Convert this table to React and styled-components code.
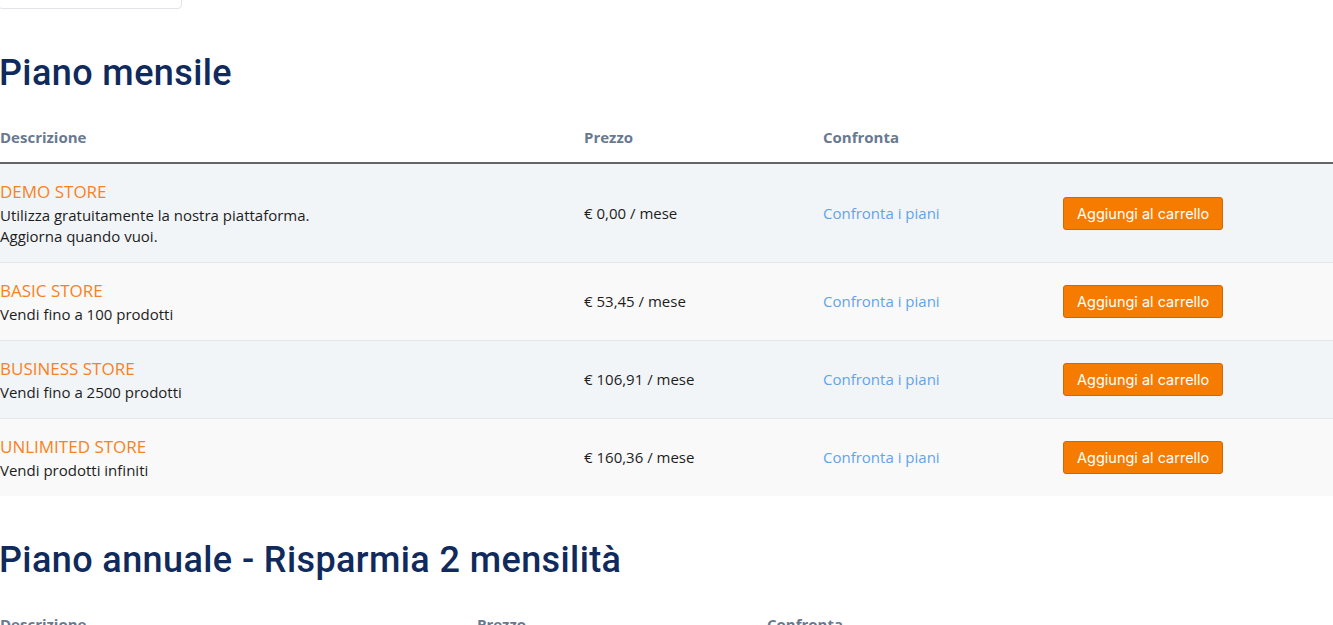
import styled, { createGlobalStyle } from "styled-components";

const monthly = [
  {
    name: "DEMO STORE",
    desc: ["Utilizza gratuitamente la nostra piattaforma.", "Aggiorna quando vuoi."],
    price: "€ 0,00",
  },
  { name: "BASIC STORE", desc: ["Vendi fino a 100 prodotti"], price: "€ 53,45" },
  { name: "BUSINESS STORE", desc: ["Vendi fino a 2500 prodotti"], price: "€ 106,91" },
  { name: "UNLIMITED STORE", desc: ["Vendi prodotti infiniti"], price: "€ 160,36" },
];

const GlobalStyle = createGlobalStyle`
  body {
    margin: 0;
    background: #fff;
    font-family: "Open Sans", "Liberation Sans", sans-serif;
    color: #1f1f1f;
  }
`;

const Page = styled.div`
  width: 1333px;
  overflow: hidden;
`;

const TopBox = styled.div`
  width: 184px;
  height: 30px;
  margin-top: -21px;
  margin-left: -2px;
  border: 1px solid #e3e3ea;
  border-radius: 4px;
  box-sizing: border-box;
`;

const Heading = styled.h2`
  margin: 43px 0 20px -1px;
  font-family: Roboto, "Liberation Sans", sans-serif;
  font-size: 36px;
  font-weight: 500;
  line-height: 42px;
  letter-spacing: 0.4px;
  color: #102a5c;
`;

const Table = styled.table`
  width: 100%;
  border-collapse: collapse;
  font-size: 15px;
`;

const Th = styled.th`
  text-align: left;
  font-size: 15px;
  font-weight: 700;
  color: #687990;
  padding: 13px 0 15px;
  line-height: 20px;
  border-bottom: 2px solid #666;
`;

const Row = styled.tr`
  background: ${(p) => (p.$odd ? "#f2f5f8" : "#f9f9f9")};
  border-top: 1px solid #e3e6ea;
`;

const Td = styled.td`
  padding: 15px 0;
  vertical-align: middle;
  line-height: 21px;
`;

const PlanName = styled.div`
  font-size: 17px;
  line-height: 26px;
  color: #fa8122;
`;

const PlanDesc = styled.div`
  color: #1d1d1d;
`;

const Price = styled.span`
  color: #1d1d1d;
`;

const CompareLink = styled.a`
  color: #5fa4ee;
  text-decoration: none;
  cursor: pointer;
`;

const CartButton = styled.button`
  font-family: Inter, "Liberation Sans", sans-serif;
  font-size: 14.5px;
  color: #fff;
  background: #f57c00;
  border: 1px solid #cc6a06;
  border-radius: 3px;
  height: 33px;
  padding: 0 13px;
  cursor: pointer;
`;

const PlanTable = ({ widths, plans }) => (
  <Table>
    <colgroup>
      {widths.map((w, i) => (
        <col key={i} style={{ width: w }} />
      ))}
      <col />
    </colgroup>
    <thead>
      <tr>
        <Th>Descrizione</Th>
        <Th>Prezzo</Th>
        <Th>Confronta</Th>
        <Th />
      </tr>
    </thead>
    <tbody>
      {plans.map((plan, i) => (
        <Row key={plan.name} $odd={i % 2 === 0}>
          <Td>
            <PlanName>{plan.name}</PlanName>
            {plan.desc.map((line) => (
              <PlanDesc key={line}>{line}</PlanDesc>
            ))}
          </Td>
          <Td>
            <Price>{plan.price} / mese</Price>
          </Td>
          <Td>
            <CompareLink>Confronta i piani</CompareLink>
          </Td>
          <Td>
            <CartButton type="button">Aggiungi al carrello</CartButton>
          </Td>
        </Row>
      ))}
    </tbody>
  </Table>
);

export default function App() {
  return (
    <Page>
      <GlobalStyle />
      <TopBox />
      <Heading>Piano mensile</Heading>
      <PlanTable widths={["584px", "239px", "240px"]} plans={monthly} />
      <Heading>Piano annuale - Risparmia 2 mensilità</Heading>
      <PlanTable widths={["477px", "290px", "290px"]} plans={monthly} />
    </Page>
  );
}
